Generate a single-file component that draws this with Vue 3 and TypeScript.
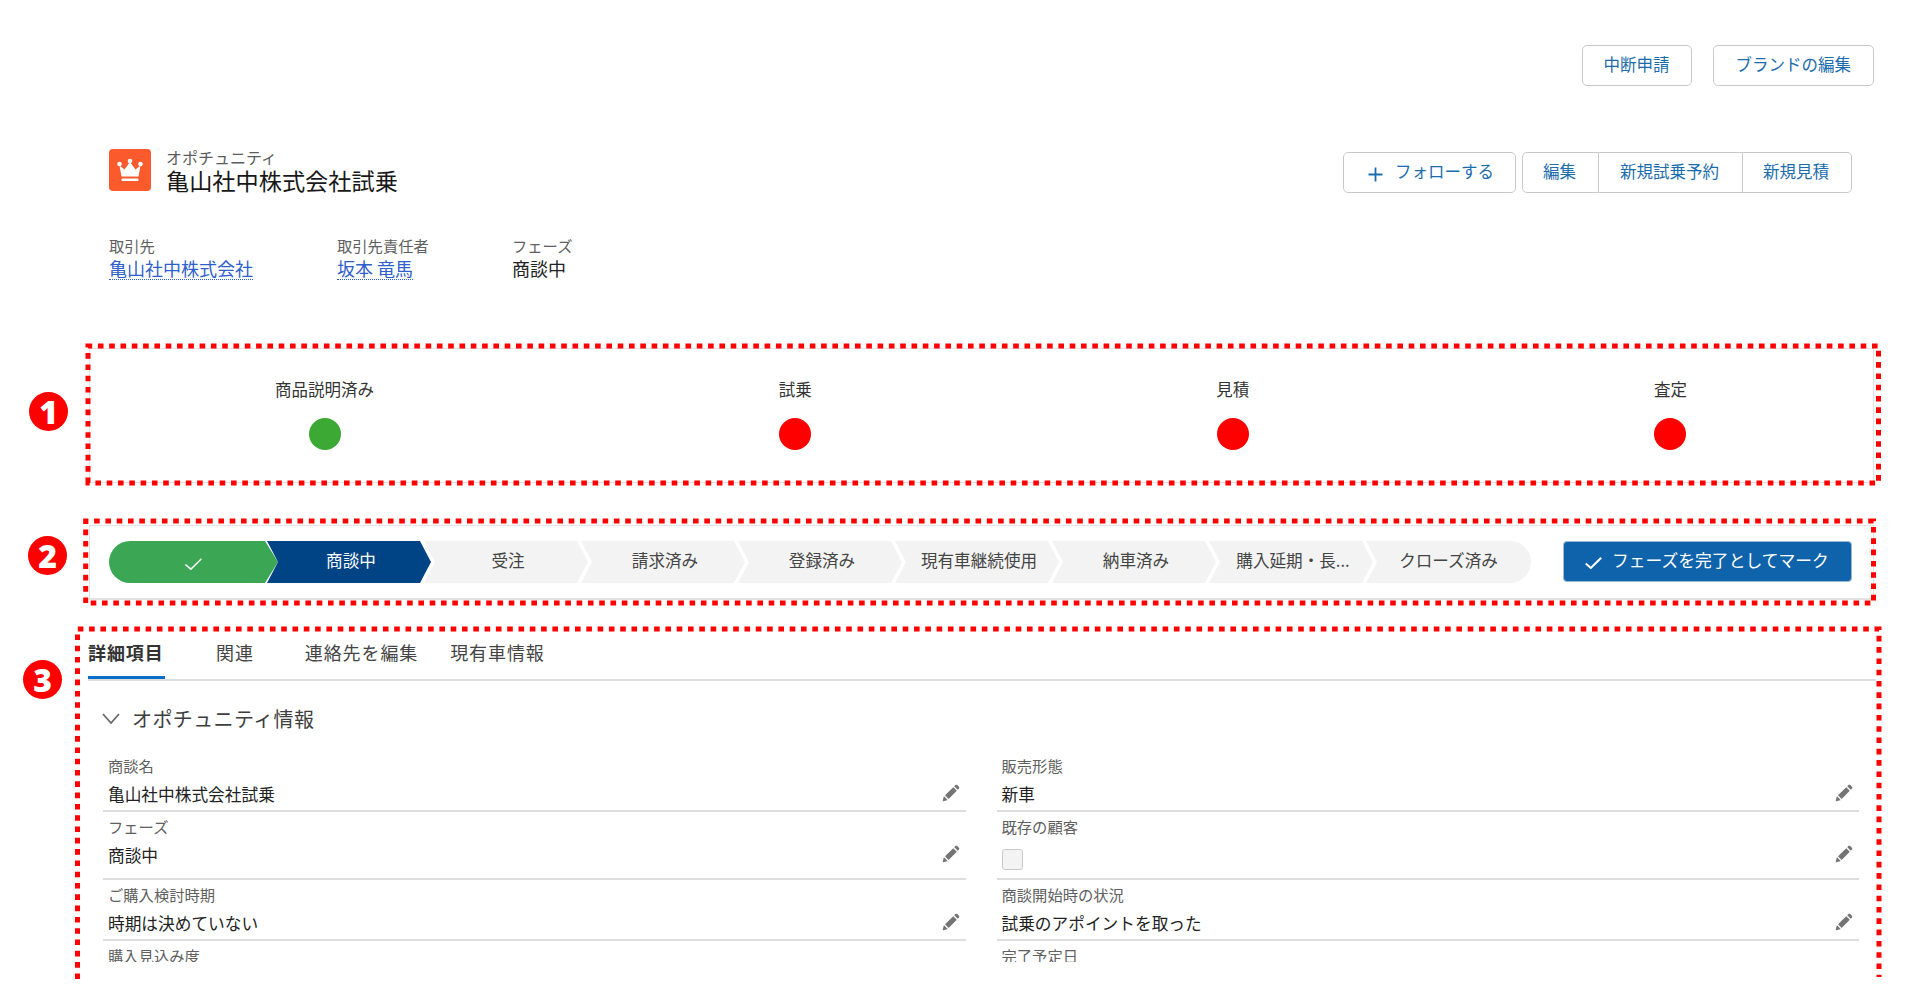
<script setup lang="ts">
interface Field { label: string; value?: string; checkbox?: boolean }

const milestones: { label: string; done: boolean }[] = [
  { label: '商品説明済み', done: true },
  { label: '試乗', done: false },
  { label: '見積', done: false },
  { label: '査定', done: false },
]
const steps: string[] = ['商談中', '受注', '請求済み', '登録済み', '現有車継続使用', '納車済み', '購入延期・長...', 'クローズ済み']
const fields: Field[] = [
  { label: '商談名', value: '亀山社中株式会社試乗' },
  { label: '販売形態', value: '新車' },
  { label: 'フェーズ', value: '商談中' },
  { label: '既存の顧客', checkbox: true },
  { label: 'ご購入検討時期', value: '時期は決めていない' },
  { label: '商談開始時の状況', value: '試乗のアポイントを取った' },
  { label: '購入見込み度' },
  { label: '完了予定日' },
]
const editPath =
  'M9.5 33.4l8.9 8.9c.4.4 1 .4 1.4 0L42 20c.4-.4.4-1 0-1.4l-8.8-8.8c-.4-.4-1-.4-1.4 0L9.5 32.1c-.4.4-.4 1 0 1.3zM36.1 5.7c-.4.4-.4 1 0 1.4l8.8 8.8c.4.4 1 .4 1.4 0l2.5-2.5c1.6-1.5 1.6-3.9 0-5.5l-4.7-4.7c-1.6-1.6-4.1-1.6-5.7 0l-2.3 2.5zM2.1 48.2c-.2 1 .7 1.9 1.7 1.7l10.9-2.6c.4-.1.7-.3.9-.5l.2-.2c.2-.2.3-.9-.1-1.3l-9-9c-.4-.4-1.1-.3-1.3-.1l-.2.2c-.3.3-.4.6-.5.9L2.1 48.2z'
</script>

<template>
  <div class="page">
    <div class="top-actions">
      <button class="btn narrow">中断申請</button>
      <button class="btn">ブランドの編集</button>
    </div>

    <header class="head">
      <div class="head-title">
        <svg class="crown" viewBox="0 0 42 42" width="42" height="42">
          <rect width="42" height="42" rx="4" fill="#fb5a2c" />
          <circle cx="10.5" cy="15" r="2.3" fill="#fff" />
          <circle cx="21" cy="12" r="2.3" fill="#fff" />
          <circle cx="31.5" cy="15" r="2.3" fill="#fff" />
          <path d="M10.5 16.5 L15.5 20.5 L20.2 14 L21.8 14 L26.5 20.5 L31.5 16.5 L29.5 27.5 L12.5 27.5 Z" fill="#fff" />
          <rect x="12.5" y="29.5" width="17" height="2.6" rx="1" fill="#fff" />
        </svg>
        <div class="head-text">
          <div class="eyebrow">オポチュニティ</div>
          <h1 class="title">亀山社中株式会社試乗</h1>
        </div>
      </div>
      <div class="head-actions">
        <button class="btn follow">
          <svg viewBox="0 0 15 15" width="15" height="15"><path d="M7.5 0.5v14M0.5 7.5h14" stroke="#1b6cad" stroke-width="1.8" fill="none" /></svg>
          フォローする
        </button>
        <div class="btn-group">
          <button class="btn">編集</button>
          <button class="btn">新規試乗予約</button>
          <button class="btn">新規見積</button>
        </div>
      </div>
    </header>

    <div class="meta">
      <div class="meta-item m1"><div class="meta-label">取引先</div><a class="link">亀山社中株式会社</a></div>
      <div class="meta-item m2"><div class="meta-label">取引先責任者</div><a class="link">坂本 竜馬</a></div>
      <div class="meta-item"><div class="meta-label">フェーズ</div><div class="meta-value">商談中</div></div>
    </div>

    <section class="card milestones">
      <div v-for="m in milestones" :key="m.label" class="milestone">
        <div class="milestone-label">{{ m.label }}</div>
        <div class="dot" :class="{ done: m.done }"></div>
      </div>
    </section>

    <section class="card progress">
      <div class="path">
        <div class="seg first">
          <svg viewBox="0 0 17 12" width="17" height="12"><path d="M0.5 6.5 L5.8 11.2 L16.5 0.7" stroke="#fff" stroke-width="1.6" fill="none" /></svg>
        </div>
        <div
          v-for="(s, i) in steps"
          :key="s"
          class="seg"
          :class="{ current: i === 0, last: i === steps.length - 1 }"
        >{{ s }}</div>
      </div>
      <button class="mark">
        <svg viewBox="0 0 17 12" width="17" height="12"><path d="M0.8 6.5 L5.8 11 L16.2 0.8" stroke="#fff" stroke-width="2" fill="none" /></svg>
        フェーズを完了としてマーク
      </button>
    </section>

    <nav class="tabs">
      <div class="tab active">詳細項目</div>
      <div class="tab">関連</div>
      <div class="tab">連絡先を編集</div>
      <div class="tab">現有車情報</div>
    </nav>

    <div class="section-head">
      <svg viewBox="0 0 18 11" width="18" height="11"><path d="M1 1 L9 10 L17 1" stroke="#6a6a6a" stroke-width="1.8" fill="none" /></svg>
      <span>オポチュニティ情報</span>
    </div>

    <div class="fields">
      <div v-for="f in fields" :key="f.label" class="field">
        <div class="field-label">{{ f.label }}</div>
        <div class="field-row">
          <div v-if="f.checkbox" class="check"></div>
          <div v-else class="field-value">{{ f.value }}</div>
          <svg v-if="f.value || f.checkbox" class="pencil" viewBox="0 0 52 52" width="18" height="18"><path :d="editPath" fill="#747474" /></svg>
        </div>
      </div>
    </div>

    <svg class="marks" viewBox="0 0 1920 997" width="1920" height="997">
      <g fill="none" stroke="#f00" stroke-width="5" stroke-dasharray="5.6 5.7">
        <path d="M88 483V346H1878.5V483Z" />
        <path d="M85.7 603V521H1873.5V603Z" />
        <path d="M77.5 979V629H1879V977" />
      </g>
    </svg>
    <div class="badge b1">1</div>
    <div class="badge b2">2</div>
    <div class="badge b3">3</div>
  </div>
</template>

<style>
html, body { margin: 0; background: #fff; }
</style>

<style scoped>
.page {
  position: relative;
  width: 1920px;
  height: 997px;
  overflow: hidden;
  background: #fff;
  color: #181818;
  font-family: "Noto Sans CJK JP", "Noto Sans", sans-serif;
  box-sizing: border-box;
  padding-top: 45px;
}
.top-actions {
  display: flex;
  justify-content: flex-end;
  gap: 21px;
  padding-right: 46px;
}
.btn {
  height: 41px;
  padding: 0 21px 4px;
  border: 1px solid #c9c9c9;
  border-radius: 5px;
  background: #fff;
  color: #1b6cad;
  font: inherit;
  font-size: 16.5px;
  white-space: nowrap;
  box-sizing: border-box;
}
.top-actions .btn:last-child { padding: 0 22px 4px; }
.head {
  display: flex;
  justify-content: space-between;
  height: 47px;
  margin-top: 63px;
  padding: 0 68px 0 109px;
}
.head-title { display: flex; gap: 15px; align-items: flex-start; }
.crown { display: block; }
.eyebrow { font-size: 16px; line-height: 18px; color: #5c5c5c; margin-top: -1px; }
.title { margin: 0; font-size: 23.2px; line-height: 28px; font-weight: 400; color: #181818; }
.head-actions { display: flex; gap: 6px; margin-top: 3px; }
.follow { display: flex; align-items: center; gap: 12px; padding-left: 24px; padding-right: 21px; }
.follow svg { margin-top: 7px; }
.btn-group { display: flex; }
.btn-group .btn { border-radius: 0; border-left-width: 0; }
.btn-group .btn:first-child { border-left-width: 1px; border-radius: 5px 0 0 5px; padding: 0 22px 4px 20px; }
.btn-group .btn:nth-child(2) { padding: 0 23px 4px 21px; }
.btn-group .btn:last-child { border-radius: 0 5px 5px 0; padding: 0 22px 4px 20px; }
.meta { display: flex; margin-top: 39px; padding-left: 109px; }
.meta-item { display: flex; flex-direction: column; align-items: flex-start; }
.m1 { width: 228px; }
.m2 { width: 175px; }
.meta-label { font-size: 15.3px; line-height: 20px; color: #606060; }
.meta-value { font-size: 18px; line-height: 24px; margin-top: 1px; color: #222; }
.link { font-size: 18px; line-height: 22px; margin-top: 2px; color: #2f5fcc; border-bottom: 1px dotted #2f5fcc; }
.card {
  margin: 0 46px 0 89px;
  box-sizing: border-box;
  border: 1px solid #e2e2e2;
}
.milestones {
  margin-top: 68px;
  height: 135px;
  padding: 30px 186px 0 185px;
  display: flex;
  justify-content: space-between;
}
.milestone { display: flex; flex-direction: column; align-items: center; }
.milestone-label { font-size: 16.5px; line-height: 20px; color: #333; }
.dot { width: 32px; height: 32px; border-radius: 50%; background: #f00; margin-top: 19px; }
.dot.done { background: #3ca935; }
.progress {
  margin-top: 42px;
  height: 75px;
  border-bottom-width: 2px;
  padding: 15px 21px 0 19px;
  display: flex;
  justify-content: space-between;
  align-items: flex-start;
}
.path { display: flex; width: 1423px; height: 42px; }
.seg {
  width: 164px;
  flex: none;
  height: 42px;
  margin-left: -7px;
  padding: 0 0 5px 4px;
  box-sizing: border-box;
  display: flex;
  align-items: center;
  justify-content: center;
  background: #f3f3f3;
  color: #444;
  font-size: 16.6px;
  white-space: nowrap;
  clip-path: polygon(0 0, calc(100% - 11px) 0, 100% 50%, calc(100% - 11px) 100%, 0 100%, 11px 50%);
}
.seg.first {
  margin-left: 0;
  width: 169px;
  padding: 4px 0 0;
  background: #3ba755;
  border-radius: 21px 0 0 21px;
  clip-path: polygon(0 0, calc(100% - 13px) 0, 100% 50%, calc(100% - 13px) 100%, 0 100%);
}
.seg.current { background: #014486; color: #fff; margin-left: -11px; }
.seg.last {
  width: 165px;
  padding-left: 0;
  border-radius: 0 21px 21px 0;
  clip-path: polygon(0 0, 100% 0, 100% 100%, 0 100%, 11px 50%);
}
.mark {
  width: 289px;
  height: 41px;
  padding: 0 0 3px 21px;
  display: flex;
  align-items: center;
  gap: 10px;
  border: 1px solid #9db8d2;
  border-radius: 4px;
  background: #0f63ab;
  color: #fff;
  font: inherit;
  font-size: 16.8px;
  box-sizing: border-box;
  white-space: nowrap;
}
.mark svg { margin-top: 6px; }
.tabs {
  display: flex;
  margin: 30px 44px 0 88px;
  height: 51px;
  border-bottom: 2px solid #dedede;
  box-sizing: border-box;
}
.tab {
  font-size: 18px;
  letter-spacing: 0.9px;
  line-height: 45px;
  color: #444;
  white-space: nowrap;
}
.tab + .tab { margin-left: 51px; }
.tab:last-child { margin-left: 32px; }
.tab.active {
  width: 77px;
  font-weight: 700;
  letter-spacing: 0.9px;
  color: #333;
  border-bottom: 3px solid #0b6fc5;
  height: 49px;
  box-sizing: border-box;
}
.section-head {
  display: flex;
  align-items: center;
  gap: 12px;
  margin: 23px 0 0 102px;
  height: 28px;
  font-size: 20px;
  letter-spacing: 0.4px;
  color: #3e3e3e;
}
.fields {
  margin: 19px 61px 0 103px;
  height: 211px;
  overflow: hidden;
  display: grid;
  grid-template-columns: 1fr 1fr;
  column-gap: 31px;
  align-content: start;
}
.field {
  border-bottom: 2px solid #dedede;
  padding: 4px 6px 4px 5px;
  box-sizing: border-box;
}
.field-label { font-size: 15.3px; line-height: 20px; color: #606060; white-space: nowrap; }
.field-row { display: flex; justify-content: space-between; align-items: flex-start; margin-top: 7px; min-height: 24px; }
.field-value { font-size: 16.7px; line-height: 24px; color: #222; white-space: nowrap; }
.pencil { display: block; margin-top: 2px; flex: none; }
.check {
  width: 21px;
  height: 21px;
  margin: 6px 0 4px;
  box-sizing: border-box;
  background: #f3f3f3;
  border: 1px solid #c9c9c9;
  border-radius: 3px;
}
.marks { position: absolute; left: 0; top: 0; pointer-events: none; }
.badge {
  position: absolute;
  width: 39px;
  height: 39px;
  border-radius: 50%;
  background: #f00;
  color: #fff;
  font-family: "Open Sans", sans-serif;
  font-weight: 800;
  font-size: 32px;
  line-height: 39px;
  text-align: center;
}
.b1 { left: 29px; top: 392px; }
.b2 { left: 28px; top: 536px; }
.b3 { left: 23px; top: 660px; }
</style>
